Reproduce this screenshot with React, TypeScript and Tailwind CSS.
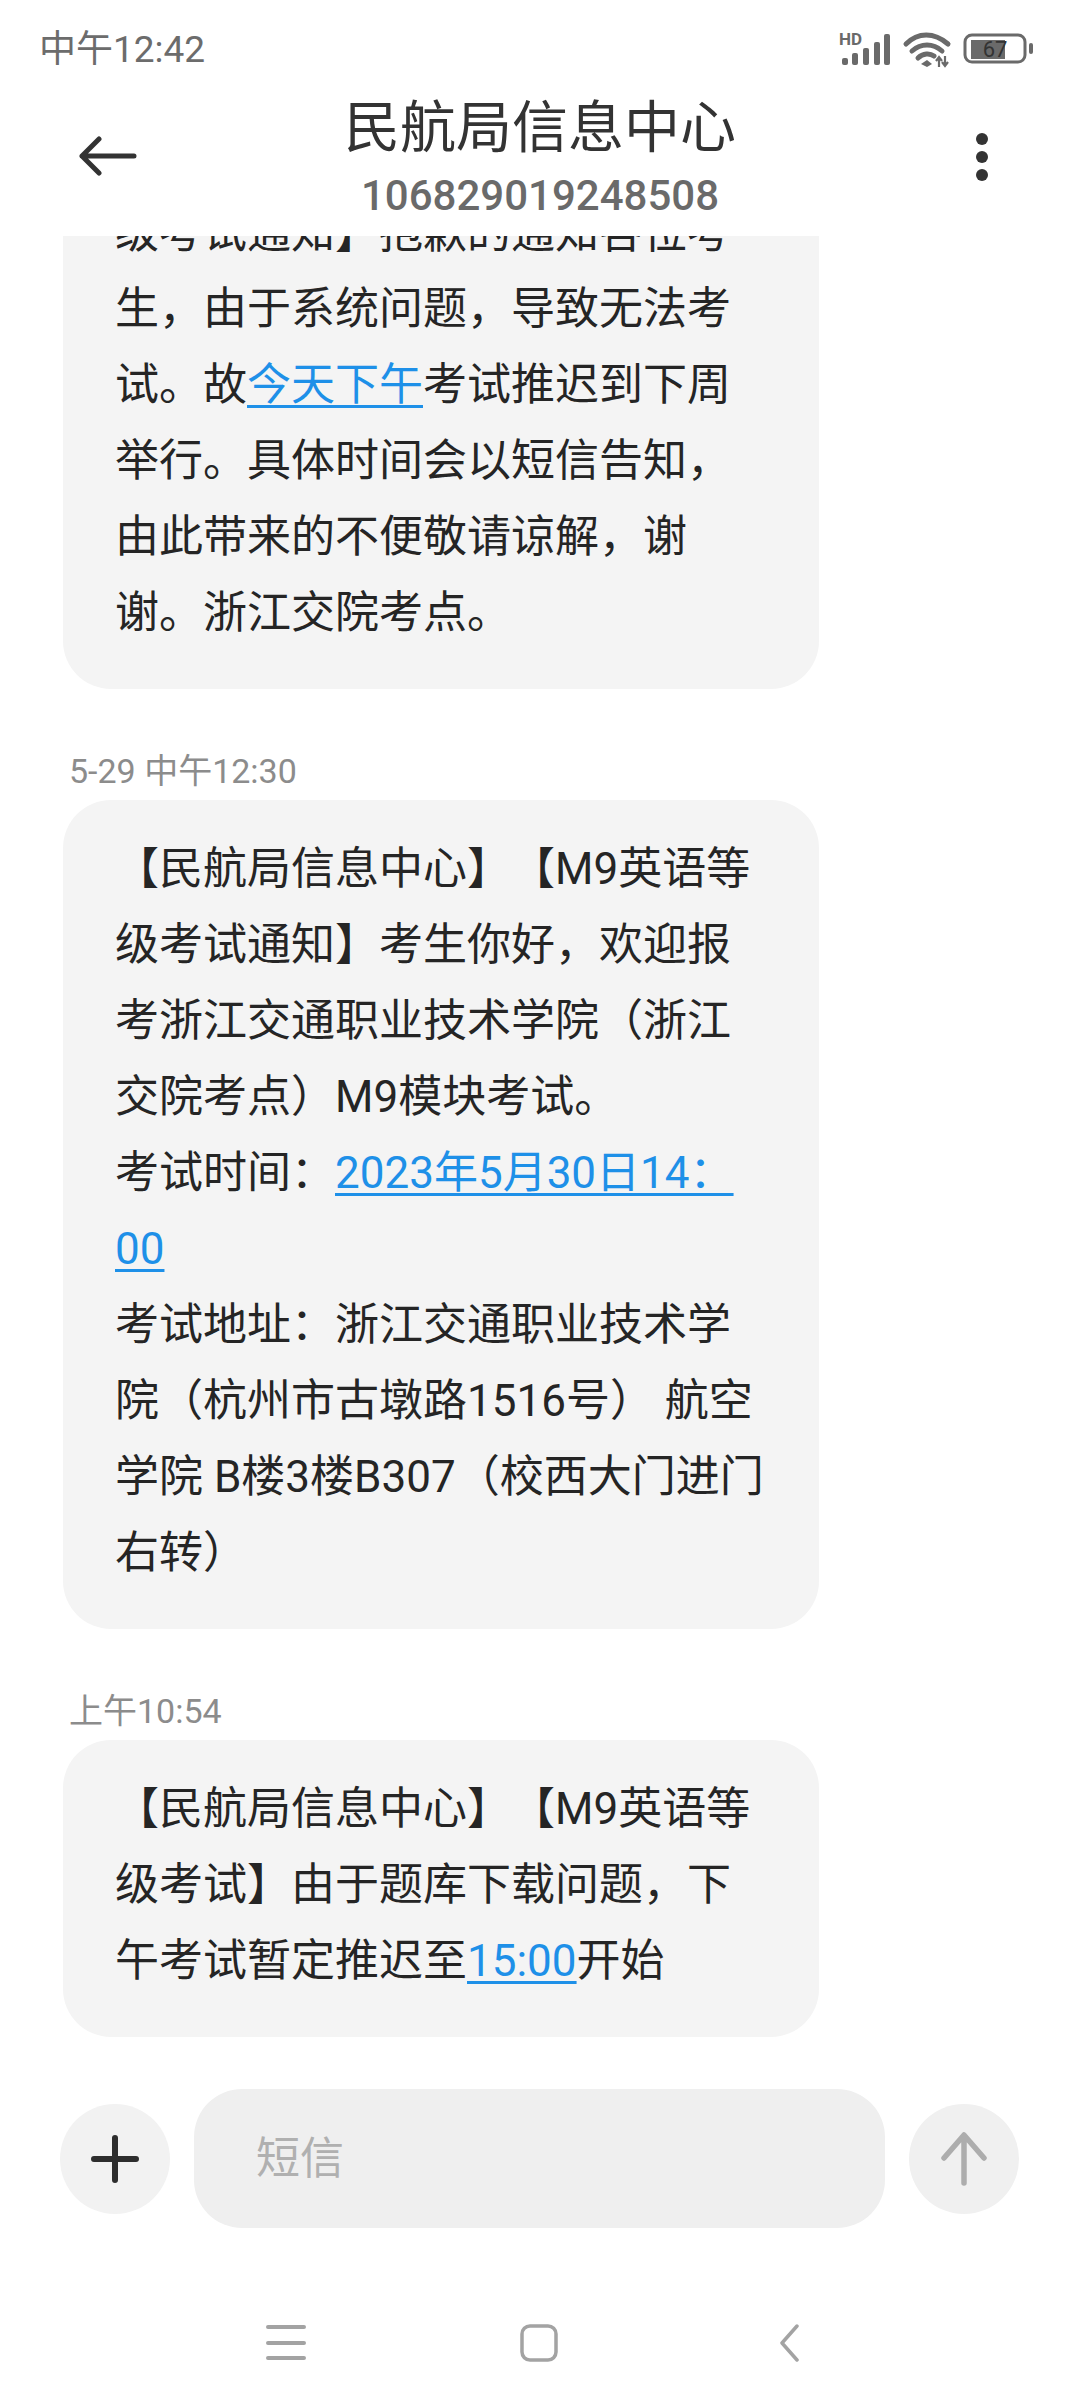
const font = '[font-family:Roboto,"Noto_Sans_CJK_SC",sans-serif]';

function Link({ children }: { children: React.ReactNode }) {
  return <span className="text-[#1e90e8] underline underline-offset-[5px] decoration-[3px]">{children}</span>;
}

function Bubble({ lines }: { lines: React.ReactNode[] }) {
  return (
    <div className="w-[756px] shrink-0 rounded-[48px] bg-[#f4f4f4] pl-[52px] pt-[31px] pb-[38px] text-[44px] leading-[76px] text-[#252525] [text-spacing-trim:space-all]">
      {lines.map((line, i) => (
        <div key={i} className="whitespace-nowrap">{line}</div>
      ))}
    </div>
  );
}

function Time({ children }: { children: React.ReactNode }) {
  return <div className="mt-[62px] mb-[9px] pl-[6px] text-[34px] leading-[40px] text-[#8c8c8c] shrink-0">{children}</div>;
}

function StatusIcons() {
  return (
    <svg width="196" height="36" viewBox="0 0 196 36" className="overflow-visible text-[#6a6a6a]">
      <text x="-1" y="13" fontSize="17" fontWeight="700" fill="currentColor" fontFamily="Roboto">HD</text>
      <g fill="currentColor">
        <rect x="2" y="26" width="6" height="7" rx="2" />
        <rect x="12" y="21" width="6" height="12" rx="2" />
        <rect x="23" y="16" width="6" height="17" rx="2" />
        <rect x="34" y="10" width="6" height="23" rx="2" />
        <rect x="44" y="2" width="6" height="31" rx="2" />
      </g>
      <g fill="none" stroke="currentColor" strokeWidth="5" strokeLinecap="round">
        <path d="M66 12 C78 0 94 0 108 12" />
        <path d="M72 19 C81 11 93 11 102 19" />
        <path d="M78 26 C83 21 90 21 94 24" />
      </g>
      <path d="M81 32 L87 28 L92 32 L87 35 Z" fill="currentColor" />
      <path d="M99 35 V26 M96 29 L99 25 L102 29 M105 24 V33 M102 30 L105 34 L108 30" stroke="currentColor" strokeWidth="2.2" fill="none" />
      <rect x="125" y="3" width="60" height="27" rx="7" fill="none" stroke="currentColor" strokeWidth="3" />
      <rect x="131" y="8" width="34" height="19" fill="currentColor" />
      <rect x="189" y="11" width="4" height="11" rx="2" fill="currentColor" />
      <text x="155" y="25" textAnchor="middle" fontSize="22" fill="#333" fontFamily="Roboto">67</text>
    </svg>
  );
}

export default function App() {
  return (
    <div className={`flex h-[2408px] w-[1080px] flex-col overflow-hidden bg-white ${font}`}>
      {/* Status bar */}
      <div className="flex h-[82px] shrink-0 items-start justify-between pl-[39px] pr-[44px] pt-[28px]">
        <span className="text-[37px] leading-[44px] text-[#6c6c6c]">中午12:42</span>
        <div className="pt-[4px]"><StatusIcons /></div>
      </div>

      {/* Header */}
      <div className="flex h-[154px] shrink-0 items-start">
        <div className="w-[120px] pl-[79px] pt-[54px]">
          <svg width="58" height="40" viewBox="0 0 58 40" fill="none" stroke="#333" strokeWidth="5" strokeLinecap="round" strokeLinejoin="round">
            <path d="M20 3 L3 20 L20 37 M3 20 H55" />
          </svg>
        </div>
        <div className="w-[840px] text-center">
          <div className="text-[56px] leading-[70px] mt-[11px] text-[#333]">民航局信息中心</div>
          <div className="text-[42px] leading-[50px] mt-[8px] font-medium text-[#6a6a6a]">106829019248508</div>
        </div>
        <div className="ml-[16px] flex flex-col gap-[6px] pt-[51px]">
          <span className="h-[12px] w-[12px] rounded-full bg-[#333]" />
          <span className="h-[12px] w-[12px] rounded-full bg-[#333]" />
          <span className="h-[12px] w-[12px] rounded-full bg-[#333]" />
        </div>
      </div>

      {/* Messages */}
      <div className="flex min-h-0 flex-1 flex-col justify-end overflow-hidden pl-[63px] pb-[52px]">
        <Bubble
          lines={[
            '【民航局信息中心】【M9英语等',
            '级考试通知】抱歉的通知各位考',
            '生，由于系统问题，导致无法考',
            <>试。故<Link>今天下午</Link>考试推迟到下周</>,
            '举行。具体时间会以短信告知，',
            '由此带来的不便敬请谅解，谢',
            '谢。浙江交院考点。',
          ]}
        />
        <Time>5-29 中午12:30</Time>
        <Bubble
          lines={[
            '【民航局信息中心】【M9英语等',
            '级考试通知】考生你好，欢迎报',
            '考浙江交通职业技术学院（浙江',
            '交院考点）M9模块考试。',
            <>考试时间：<Link>2023年5月30日14：</Link></>,
            <Link>00</Link>,
            '考试地址：浙江交通职业技术学',
            '院（杭州市古墩路1516号） 航空',
            '学院 B楼3楼B307（校西大门进门',
            '右转）',
          ]}
        />
        <Time>上午10:54</Time>
        <Bubble
          lines={[
            '【民航局信息中心】【M9英语等',
            '级考试】由于题库下载问题，下',
            <>午考试暂定推迟至<Link>15:00</Link>开始</>,
          ]}
        />
      </div>

      {/* Composer */}
      <div className="flex h-[139px] shrink-0 items-center gap-[24px] pl-[60px]">
        <div className="flex h-[110px] w-[110px] items-center justify-center rounded-full bg-[#f2f2f2]">
          <svg width="48" height="48" viewBox="0 0 48 48" fill="none" stroke="#2e2e2e" strokeWidth="6" strokeLinecap="round">
            <path d="M24 3 V45 M3 24 H45" />
          </svg>
        </div>
        <div className="flex h-[139px] w-[691px] items-center rounded-[48px] bg-[#efefef] pl-[62px] text-[44px] text-[#b0b0b0]">短信</div>
        <div className="flex h-[110px] w-[110px] items-center justify-center rounded-full bg-[#f0f0f0]">
          <svg width="46" height="54" viewBox="0 0 46 54" fill="none" stroke="#adadad" strokeWidth="5.5" strokeLinecap="round" strokeLinejoin="round">
            <path d="M23 51 V4 M3 26 L23 3 L43 26" />
          </svg>
        </div>
      </div>

      {/* Nav */}
      <div className="flex h-[180px] shrink-0 items-start gap-[214px] pl-[266px] pt-[96px]">
        <svg width="40" height="38" viewBox="0 0 40 38" fill="none" stroke="#a3a3a3" strokeWidth="4" strokeLinecap="round">
          <path d="M2 3 H38 M2 19 H38 M2 34 H38" />
        </svg>
        <svg width="38" height="38" viewBox="0 0 38 38" fill="none" stroke="#a3a3a3" strokeWidth="3.5">
          <rect x="2" y="2" width="34" height="34" rx="8" />
        </svg>
        <svg className="ml-[7px]" width="20" height="38" viewBox="0 0 20 38" fill="none" stroke="#a3a3a3" strokeWidth="3.5" strokeLinecap="round" strokeLinejoin="round">
          <path d="M18 2 L3 19 L18 36" />
        </svg>
      </div>
    </div>
  );
}
